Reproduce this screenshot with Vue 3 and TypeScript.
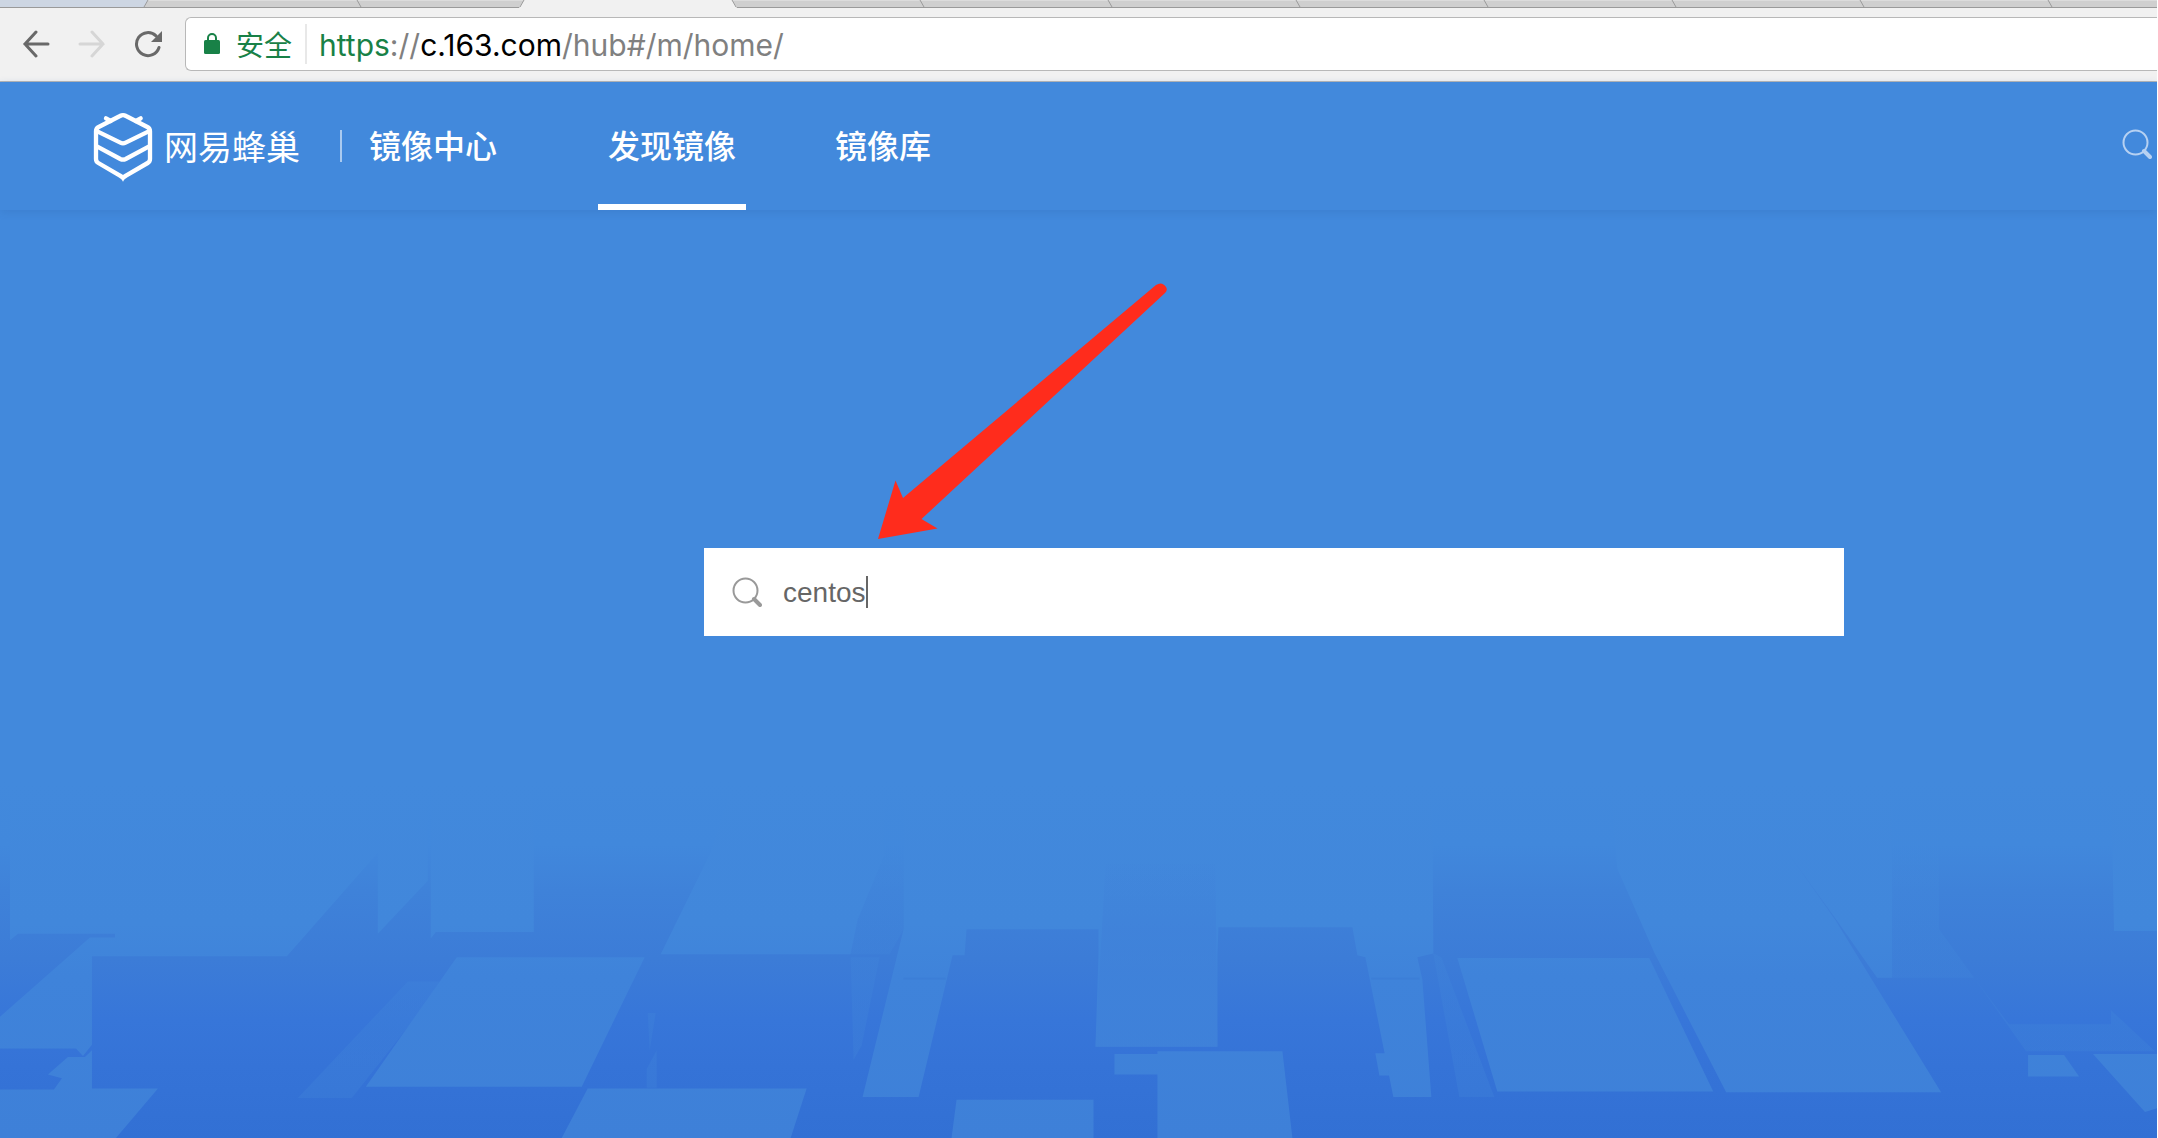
<script setup lang="ts">
import { ref } from 'vue'

interface NavItem {
  label: string
  href: string
  active: boolean
}

const keyword = ref<string>('centos')

const navItems: NavItem[] = [
  { label: '发现镜像', href: '#/m/home/', active: true },
  { label: '镜像库', href: '#/m/library/', active: false },
]

// Left edges of the slanted separators between background tabs
const tabEdges: number[] = [357, 920, 1108, 1296, 1484, 1672, 1860, 2048]

// Roof tiles of the hero backdrop, y measured from the top of the artwork
const tiles: string[] = [
  '10,0 10,172 18,165 115,165 115,169 90,169 0,254 0,288 76,288 83,296 92,284 92,189 287,189 378,78 378,0',
  '68,297 85,297 92,290 92,331 158,331 116,384 0,384 0,332 54,332 62,320 48,316',
  '378,0 378,165 428,108 428,0',
  '431,0 431,170 436,163 534,163 534,0',
  '735,0 710,80 661,187 851,187 858,150 885,80 885,0',
  '904,0 904,160 863,340 919,340 953,188 965,188 967,160 1099,160 1099,187 1096,286 1218,286 1218,188 1219,158 1353,158 1358,188 1366,190 1394,340 1432,340 1423,214 1418,190 1434,186 1433,0',
  '1458,191 1650,191 1714,334 1498,334',
  '1610,0 1618,95 1655,185 1727,335 1942,335 1836,150 1790,80 1770,0',
  '1770,0 1790,80 1836,148 1878,212 1893,212 1893,0',
  '2112,0 2115,162 2158,162 2158,0',
  '2029,295 2065,295 2080,318 2029,318',
  '2094,294 2158,294 2158,352 2146,356',
  '1115,294 1158,294 1158,291 1283,291 1293,384 1158,384 1158,316 1115,316',
  '957,343 1094,343 1094,384 952,384',
  '588,331 807,331 791,384 562,384',
  '457,190 645,190 582,329 366,329',
  '1376,293 1386,293 1390,317 1380,317',
]

const faintTiles: string[] = [
  '408,216 440,216 422,246 352,341 298,341',
  '648,250 656,250 650,290',
  '657,290 657,330 647,330 647,310',
  '851,190 880,190 862,285 854,300',
  '885,0 904,0 904,160 890,187 851,187',
  '1434,186 1442,190 1495,340 1460,340',
  '1893,60 1940,60 1940,160 1975,212 1893,212',
  '1975,212 2010,262 2112,262 2112,247 2156,291 2027,291',
]
</script>

<template>
  <div class="window">
    <div class="chrome">
      <svg class="tabs" viewBox="0 0 2158 8" preserveAspectRatio="xMinYMin slice" aria-hidden="true">
        <rect width="2158" height="8" fill="#cfcfcf" />
        <rect width="2158" height="1" fill="#dcdcdc" />
        <path d="M0 0H148L144 8H0Z" fill="#cdd6e3" />
        <path d="M148 0L144 7" stroke="#9a9a9a" />
        <path v-for="x in tabEdges" :key="x" :d="`M${x} 0l4 7`" stroke="#9a9a9a" />
        <rect y="7" width="2158" height="1" fill="#9a9a9a" />
        <path d="M524 0L519 8H737L732 0Z" fill="#f1f1f1" />
        <path d="M524 0L520 7M732 0L736 7" fill="none" stroke="#9a9a9a" />
      </svg>
      <div class="toolbar">
        <button class="tool" type="button" aria-label="后退">
          <svg viewBox="0 0 28 28" width="28" height="28">
            <path d="M14 2L3 14L14 26M3 14H26" fill="none" stroke="#696969" stroke-width="3" stroke-linecap="round" />
          </svg>
        </button>
        <button class="tool" type="button" aria-label="前进">
          <svg viewBox="0 0 28 28" width="28" height="28">
            <path d="M14 2L25 14L14 26M25 14H2" fill="none" stroke="#d6d6d6" stroke-width="3" stroke-linecap="round" />
          </svg>
        </button>
        <button class="tool" type="button" aria-label="重新加载">
          <svg viewBox="0 0 28 28" width="28" height="28">
            <path d="M25 17.500A11.500 11.500 0 1 1 22 5.800" fill="none" stroke="#696969" stroke-width="3" stroke-linecap="round" />
            <path d="M28 1V12H17Z" fill="#696969" />
          </svg>
        </button>
        <div class="address">
          <svg class="lock" viewBox="0 0 16 22" width="16" height="22" aria-hidden="true">
            <path d="M4 8V5a4 4 0 0 1 8 0V8" fill="none" stroke="#188147" stroke-width="2" />
            <rect y="7" width="16" height="14" rx="1.500" fill="#188147" />
          </svg>
          <span class="secure">安全</span>
          <span class="url"><span class="scheme">https</span>://<span class="host">c.163.com</span>/hub#/m/home/</span>
        </div>
      </div>
    </div>

    <header class="header">
      <a class="logo" href="#/">
        <svg viewBox="36 36 186 213" width="62" height="71" aria-hidden="true">
          <g fill="none" stroke="#fff" stroke-width="13" stroke-linejoin="round" stroke-linecap="round">
            <path d="M120 51Q129 46 138 51L202 84Q210 88 210 97V180Q210 188 203 192L138 230L129 236L120 230L55 192Q48 188 48 180V97Q48 88 56 84Z" />
            <path d="M52 97L121 131Q129 135 137 131L206 97" />
            <path d="M52 143L121 180Q129 184 137 180L206 143" />
            <path d="M78 58L92 66M182 58L168 66" />
          </g>
          <path d="M119 230L129 248L139 230Z" fill="#fff" />
        </svg>
        <span class="logo-text">网易蜂巢</span>
      </a>
      <span class="divider"></span>
      <span class="product">镜像中心</span>
      <nav class="nav">
        <a
          v-for="item in navItems"
          :key="item.label"
          :href="item.href"
          :class="['nav-link', { active: item.active }]"
        >{{ item.label }}</a>
      </nav>
      <button class="header-search" type="button" aria-label="搜索">
        <svg viewBox="0 0 30 30" width="30" height="30">
          <circle cx="13.500" cy="13.500" r="12" fill="none" stroke="#b6d1f2" stroke-width="2" />
          <path d="M22 22L28 28" stroke="#b6d1f2" stroke-width="4" stroke-linecap="round" />
        </svg>
      </button>
    </header>

    <main class="hero">
      <svg class="backdrop" viewBox="0 0 2158 384" preserveAspectRatio="none" aria-hidden="true">
        <defs>
          <linearGradient id="wall" gradientUnits="userSpaceOnUse" x1="0" y1="0" x2="0" y2="384">
            <stop offset="0" stop-color="#4289dc" />
            <stop offset="0.180" stop-color="#4188dc" />
            <stop offset="0.310" stop-color="#3f82d9" />
            <stop offset="0.500" stop-color="#3c7cd7" />
            <stop offset="0.670" stop-color="#3776d9" />
            <stop offset="0.800" stop-color="#3573d7" />
            <stop offset="1" stop-color="#3270d4" />
          </linearGradient>
          <linearGradient id="roof" gradientUnits="userSpaceOnUse" x1="0" y1="0" x2="0" y2="384">
            <stop offset="0" stop-color="#4289dc" />
            <stop offset="0.400" stop-color="#4187db" />
            <stop offset="0.550" stop-color="#3f83da" />
            <stop offset="1" stop-color="#3e80d8" />
          </linearGradient>
          <linearGradient id="shade" gradientUnits="userSpaceOnUse" x1="0" y1="80" x2="0" y2="286">
            <stop offset="0" stop-color="#3f80d9" stop-opacity="0" />
            <stop offset="0.400" stop-color="#3f80d9" stop-opacity="0.600" />
            <stop offset="1" stop-color="#3f80d9" stop-opacity="0.400" />
          </linearGradient>
        </defs>
        <rect width="2158" height="384" fill="url(#wall)" />
        <polygon v-for="tile in tiles" :key="tile" :points="tile" fill="url(#roof)" />
        <polygon v-for="tile in faintTiles" :key="tile" :points="tile" fill="url(#roof)" opacity="0.400" />
        <path d="M1106 90H1216L1218 286H1096Z" fill="url(#shade)" />
        <path d="M904 213H946M1372 213H1420" stroke="#3a7bd5" stroke-width="2" opacity="0.500" />
      </svg>
      <div class="search">
        <label class="search-box">
          <svg viewBox="0 0 30 30" width="30" height="30" aria-hidden="true">
            <circle cx="13.500" cy="13.500" r="12" fill="none" stroke="#999" stroke-width="2" />
            <path d="M22 22L28 28" stroke="#999" stroke-width="4" stroke-linecap="round" />
          </svg>
          <input v-model="keyword" class="search-input" type="text" aria-label="搜索镜像" />
          <span class="caret"></span>
        </label>
        <svg class="arrow" viewBox="0 0 290 265" width="290" height="265" aria-hidden="true">
          <path d="M0 256L17.500 197.500L25 215L278 2Q284 -2 288 4Q290 7 287 10L43.500 236L59.500 245.500Z" fill="#ff2c1c" />
        </svg>
      </div>
    </main>
  </div>
</template>

<style>
body {
  margin: 0;
  background: #fff;
}
</style>

<style scoped>
.window {
  display: flex;
  flex-direction: column;
  min-height: 100vh;
  margin-right: 1px;
  overflow: hidden;
  font-family: "Liberation Sans", "Noto Sans CJK SC", sans-serif;
}

button {
  padding: 0;
  border: 0;
  background: none;
}

svg {
  display: block;
}

.tabs {
  width: 100%;
  height: 8px;
}

.toolbar {
  display: flex;
  align-items: center;
  gap: 28px;
  padding: 9px 0 10px 22px;
  border-bottom: 1px solid #b5b5b5;
  background: #f1f1f1;
}

.address {
  display: flex;
  flex: 1;
  align-items: center;
  box-sizing: border-box;
  height: 54px;
  margin-left: -5px;
  padding-left: 18px;
  border: 1px solid #b8b8b8;
  border-right: 0;
  border-radius: 6px 0 0 6px;
  background: #fff;
}

.secure {
  margin-left: 16px;
  padding-right: 13px;
  border-right: 2px solid #e8e8e8;
  color: #188147;
  font: 28px/40px "Noto Sans CJK SC", sans-serif;
}

.url {
  margin-left: 12px;
  padding-top: 2px;
  color: #808080;
  font: 30px/40px Inter, "Noto Sans CJK SC", sans-serif;
}

.scheme {
  color: #188147;
}

.host {
  color: #000;
}

.header {
  position: relative;
  z-index: 1;
  display: flex;
  align-items: center;
  height: 128px;
  padding: 0 5px 0 92px;
  background: #4289dc;
  box-shadow: 0 2px 8px rgba(40, 90, 160, 0.2);
  color: #fff;
}

.logo {
  display: flex;
  align-items: center;
  gap: 10px;
  color: #fff;
  text-decoration: none;
}

.logo-text {
  font: 400 34px/48px "Noto Sans CJK SC", sans-serif;
}

.divider {
  width: 2px;
  height: 32px;
  margin: 0 27px 0 40px;
  background: #a9caf0;
}

.product,
.nav-link {
  font: 500 32px/48px "Noto Sans CJK SC", sans-serif;
}

.product {
  padding-bottom: 4px;
}

.nav {
  display: flex;
  align-self: stretch;
  gap: 79px;
  margin-left: 101px;
}

.nav-link {
  display: flex;
  align-items: center;
  padding: 2px 10px 0;
  border-bottom: 6px solid transparent;
  color: #fff;
  text-decoration: none;
}

.nav-link.active {
  border-bottom-color: #fff;
}

.header-search {
  margin-left: auto;
  padding-bottom: 4px;
}

.hero {
  position: relative;
  flex: 1;
  padding: 338px 0 0 704px;
  background: #4289dc;
}

.backdrop {
  position: absolute;
  bottom: 0;
  left: 0;
  width: 100%;
  height: 358px;
}

.search {
  position: relative;
  max-width: 1140px;
}

.search-box {
  display: flex;
  align-items: center;
  height: 88px;
  padding-left: 28px;
  background: #fff;
}

.search-input {
  field-sizing: content;
  margin-left: 21px;
  padding: 2px 0 0;
  border: 0;
  outline: 0;
  background: none;
  color: #666;
  font: 28px/32px "Liberation Sans", "Noto Sans CJK SC", sans-serif;
}

.caret {
  width: 2px;
  height: 32px;
  background: #666;
}

.arrow {
  position: absolute;
  bottom: 100%;
  left: 174px;
}
</style>
